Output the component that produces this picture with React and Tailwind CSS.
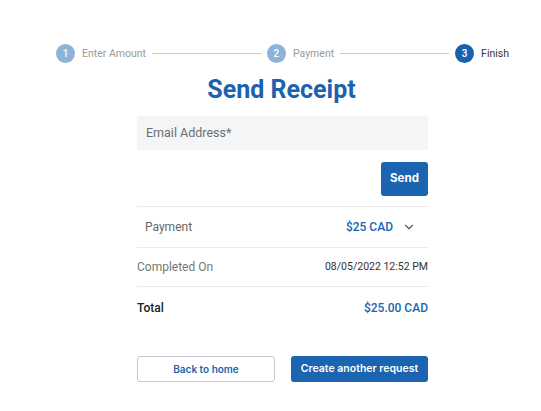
import { ChevronDown } from 'lucide-react'

function Step({ n, label, active }) {
  return (
    <div className="flex items-center gap-[7px] shrink-0">
      <span
        className={`w-[19px] h-[19px] rounded-full flex items-center justify-center text-[10px] font-medium text-white ${active ? 'bg-[#1a61ad]' : 'bg-[#8db3db]'}`}
      >
        {n}
      </span>
      <span className={`text-[10.5px] ${active ? 'text-[#333]' : 'text-[#9a9a9a]'}`}>{label}</span>
    </div>
  )
}

export default function App() {
  return (
    <div className="w-[541px] h-[411px] bg-white font-['Roboto',sans-serif] overflow-hidden">
      {/* stepper */}
      <div className="flex items-center pl-[56px] pr-[32px] pt-[44px]">
        <Step n="1" label="Enter Amount" />
        <div className="flex-1 h-px bg-[#c8c8c8] mx-[6px]" />
        <Step n="2" label="Payment" />
        <div className="flex-1 h-px bg-[#c8c8c8] mx-[6px]" />
        <Step n="3" label="Finish" active />
      </div>

      <h1 className="text-center text-[25px] font-bold text-[#1b63b0] leading-none mt-[14px] pl-[22px]">
        Send Receipt
      </h1>

      <div className="w-[291px] ml-[137px] mt-[14px]">
        <div className="h-[34px] bg-[#f4f5f7] flex items-center px-[9px] text-[12.5px] text-[#6b6f75]">
          Email Address*
        </div>
        <div className="flex justify-end mt-[12px]">
          <button className="w-[47px] h-[34px] rounded-[3px] bg-[#1b64b0] text-white text-[11.5px] font-bold font-['Inter',sans-serif]">
            Send
          </button>
        </div>

        <div className="mt-[10px] border-t border-[#ececec]" />
        <div className="h-[40px] flex items-center justify-between pl-[8px] pr-[12px]">
          <span className="text-[12px] text-[#666]">Payment</span>
          <span className="flex items-center gap-[9px] text-[12px] font-medium text-[#1b63b0]">
            $25 CAD
            <ChevronDown size={14} strokeWidth={2} className="text-[#555]" />
          </span>
        </div>
        <div className="border-t border-[#ececec]" />
        <div className="h-[38px] flex items-center justify-between">
          <span className="text-[12px] text-[#777]">Completed On</span>
          <span className="text-[10.5px] text-[#333]">08/05/2022 12:52 PM</span>
        </div>
        <div className="border-t border-[#ececec]" />
        <div className="h-[41px] flex items-center justify-between">
          <span className="text-[12px] font-medium text-[#222]">Total</span>
          <span className="text-[12px] font-medium text-[#1b63b0]">$25.00 CAD</span>
        </div>

        <div className="flex justify-between mt-[28px] font-['Inter',sans-serif]">
          <button className="w-[138px] h-[26px] rounded-[3px] border border-[#c5c9cf] bg-white text-[#1b63b0] text-[10px] font-semibold">
            Back to home
          </button>
          <button className="w-[137px] h-[26px] rounded-[3px] bg-[#1b64b0] text-white text-[10.5px] font-semibold">
            Create another request
          </button>
        </div>
      </div>
    </div>
  )
}
